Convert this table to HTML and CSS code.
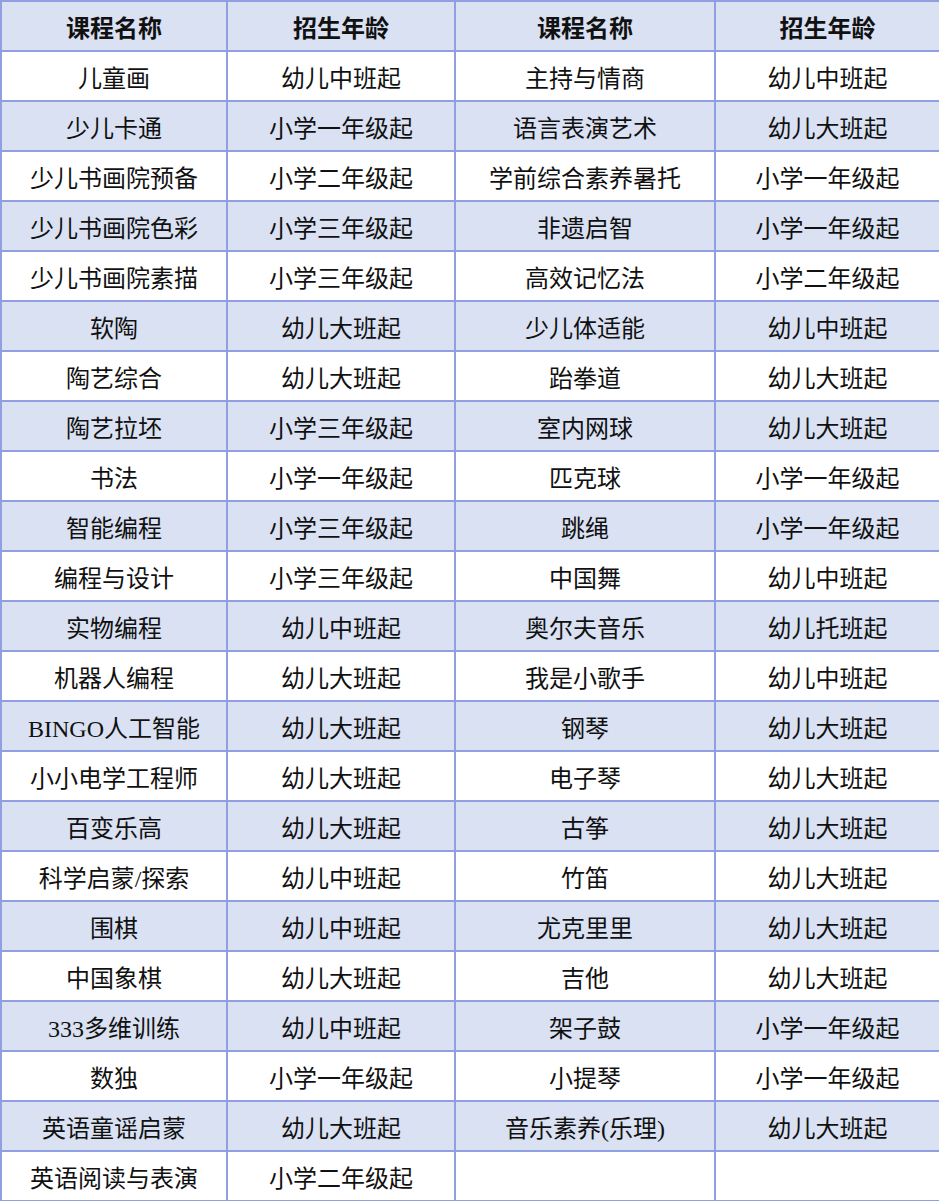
FILE: index.html
```html
<!DOCTYPE html>
<html lang="zh">
<head>
<meta charset="utf-8">
<title>课程</title>
<link rel="stylesheet" href="styles.css">
</head>
<body>
<table class="courses">
<colgroup><col class="c1"><col class="c2"><col class="c3"><col class="c4"></colgroup>
<thead>
<tr class="head"><th>课程名称</th><th>招生年龄</th><th>课程名称</th><th>招生年龄</th></tr>
</thead>
<tbody>
<tr><td>儿童画</td><td>幼儿中班起</td><td>主持与情商</td><td>幼儿中班起</td></tr>
<tr class="alt"><td>少儿卡通</td><td>小学一年级起</td><td>语言表演艺术</td><td>幼儿大班起</td></tr>
<tr><td>少儿书画院预备</td><td>小学二年级起</td><td>学前综合素养暑托</td><td>小学一年级起</td></tr>
<tr class="alt"><td>少儿书画院色彩</td><td>小学三年级起</td><td>非遗启智</td><td>小学一年级起</td></tr>
<tr><td>少儿书画院素描</td><td>小学三年级起</td><td>高效记忆法</td><td>小学二年级起</td></tr>
<tr class="alt"><td>软陶</td><td>幼儿大班起</td><td>少儿体适能</td><td>幼儿中班起</td></tr>
<tr><td>陶艺综合</td><td>幼儿大班起</td><td>跆拳道</td><td>幼儿大班起</td></tr>
<tr class="alt"><td>陶艺拉坯</td><td>小学三年级起</td><td>室内网球</td><td>幼儿大班起</td></tr>
<tr><td>书法</td><td>小学一年级起</td><td>匹克球</td><td>小学一年级起</td></tr>
<tr class="alt"><td>智能编程</td><td>小学三年级起</td><td>跳绳</td><td>小学一年级起</td></tr>
<tr><td>编程与设计</td><td>小学三年级起</td><td>中国舞</td><td>幼儿中班起</td></tr>
<tr class="alt"><td>实物编程</td><td>幼儿中班起</td><td>奥尔夫音乐</td><td>幼儿托班起</td></tr>
<tr><td>机器人编程</td><td>幼儿大班起</td><td>我是小歌手</td><td>幼儿中班起</td></tr>
<tr class="alt"><td>BINGO人工智能</td><td>幼儿大班起</td><td>钢琴</td><td>幼儿大班起</td></tr>
<tr><td>小小电学工程师</td><td>幼儿大班起</td><td>电子琴</td><td>幼儿大班起</td></tr>
<tr class="alt"><td>百变乐高</td><td>幼儿大班起</td><td>古筝</td><td>幼儿大班起</td></tr>
<tr><td>科学启蒙/探索</td><td>幼儿中班起</td><td>竹笛</td><td>幼儿大班起</td></tr>
<tr class="alt"><td>围棋</td><td>幼儿中班起</td><td>尤克里里</td><td>幼儿大班起</td></tr>
<tr><td>中国象棋</td><td>幼儿大班起</td><td>吉他</td><td>幼儿大班起</td></tr>
<tr class="alt"><td>333多维训练</td><td>幼儿中班起</td><td>架子鼓</td><td>小学一年级起</td></tr>
<tr><td>数独</td><td>小学一年级起</td><td>小提琴</td><td>小学一年级起</td></tr>
<tr class="alt"><td>英语童谣启蒙</td><td>幼儿大班起</td><td>音乐素养(乐理)</td><td>幼儿大班起</td></tr>
<tr><td>英语阅读与表演</td><td>小学二年级起</td><td></td><td></td></tr>
</tbody>
</table>
</body>
</html>
```
FILE: styles.css
```css
html, body {
  margin: 0;
  padding: 0;
  background: #ffffff;
}
.courses {
  border-collapse: collapse;
  table-layout: fixed;
  width: 939px;
  font-family: "Liberation Serif", "Noto Sans CJK SC", serif;
  font-size: 24px;
  color: #111111;
}
.c1 { width: 226px; }
.c2 { width: 228px; }
.c3 { width: 260px; }
.c4 { width: 225px; }
.courses th,
.courses td {
  border: 2px solid #8f9fe2;
  height: 42px;
  padding: 6px 0 0;
  text-align: center;
  vertical-align: middle;
  line-height: 1;
  white-space: nowrap;
}
.courses th {
  font-weight: 700;
  background: #d9e1f2;
}
.courses .alt td {
  background: #d9e1f2;
}
```
